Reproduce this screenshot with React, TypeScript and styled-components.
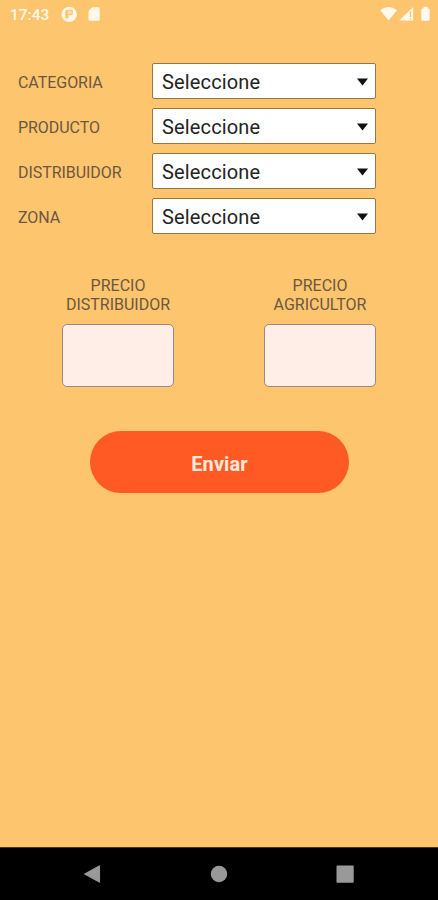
import React from 'react';
import styled, { createGlobalStyle } from 'styled-components';

const GlobalStyle = createGlobalStyle`
  *, *::before, *::after { box-sizing: border-box; }
  body { margin: 0; background: #fdc56d; }
  button, select, input { font-family: inherit; }
`;

const Screen = styled.div`
  display: flex;
  flex-direction: column;
  width: 438px;
  height: 900px;
  overflow: hidden;
  background: #fdc56d;
  font-family: Roboto, 'Liberation Sans', sans-serif;
`;

const StatusBar = styled.header`
  display: flex;
  align-items: center;
  height: 28px;
  padding: 0 7px 0 10px;
  color: #fff8ea;
`;

const Clock = styled.span`
  width: 51px;
  padding-top: 1px;
  font-size: 15.5px;
  font-weight: 500;
  line-height: 28px;
`;

const StatusIcons = styled.div<{ $end?: boolean }>`
  display: flex;
  align-items: center;
  gap: ${({ $end }) => ($end ? '0' : '9px')};
  margin-left: ${({ $end }) => ($end ? 'auto' : '0')};
  svg { display: block; }
`;

const Content = styled.main`
  flex: 1;
  padding-top: 35px;
`;

const Fields = styled.div`
  display: flex;
  flex-direction: column;
  gap: 9px;
  padding-left: 18px;
`;

const Field = styled.div`
  display: grid;
  grid-template-columns: 134px 224px;
  align-items: center;
  height: 36px;
`;

const Label = styled.span`
  padding-top: 2px;
  color: #6d5741;
  font-size: 16px;
  line-height: 19px;
  letter-spacing: -0.05px;
  white-space: nowrap;
`;

const Dropdown = styled.button`
  display: flex;
  align-items: center;
  justify-content: space-between;
  height: 36px;
  padding: 1px 7px 0 9px;
  border: 1px solid #94783f;
  border-radius: 2px;
  background: #fff;
  color: #242424;
  font-size: 20px;
  letter-spacing: 0.15px;
  text-align: left;
  svg { display: block; }
`;

const Prices = styled.div`
  display: flex;
  gap: 90px;
  padding: 42px 0 0 62px;
`;

const Price = styled.label`
  display: flex;
  flex-direction: column;
  align-items: center;
  width: 112px;
`;

const PriceTitle = styled.span`
  color: #6d5741;
  font-size: 16px;
  line-height: 19px;
  text-align: center;
`;

const PriceInput = styled.input`
  width: 112px;
  height: 63px;
  margin-top: 10px;
  border: 1px solid #a08782;
  border-radius: 5px;
  background: #ffeee7;
  outline: none;
`;

const Submit = styled.button`
  display: block;
  width: 259px;
  height: 62px;
  margin: 44px 0 0 90px;
  padding: 3px 0 0;
  border: 0;
  border-radius: 31px;
  background: #ff5a23;
  color: #ffe9df;
  font-size: 20px;
  font-weight: 700;
  letter-spacing: 0.1px;
`;

const NavBar = styled.nav`
  display: flex;
  align-items: center;
  justify-content: space-between;
  height: 53px;
  padding: 0 84px 0 83px;
  border-top: 1px solid #49391f;
  background: #000;
  svg { display: block; }
`;

const fields = ['CATEGORIA', 'PRODUCTO', 'DISTRIBUIDOR', 'ZONA'];

const prices = ['DISTRIBUIDOR', 'AGRICULTOR'];

export default function App() {
  return (
    <>
      <GlobalStyle />
      <Screen>
        <StatusBar>
          <Clock>17:43</Clock>
          <StatusIcons>
            <svg width="17" height="17" viewBox="0 0 17 17">
              <circle cx="8.2" cy="8.4" r="7.7" fill="#fff8ea" />
              <path d="M4.3 4.2h3.2v8.2H4.3z" fill="#fdc56d" />
              <path d="M7.5 4.4h3.6v4H7.5" fill="#fee2b4" stroke="#fdc56d" strokeWidth="1.2" />
            </svg>
            <svg width="14" height="16" viewBox="0 0 14 16">
              <path d="M5.2 1.2h6.2q1.3 0 1.3 1.3v11q0 1.3-1.3 1.3H2.8q-1.3 0-1.3-1.3V5z" fill="#fff8ea" />
              <path d="M5.5 3v2M7.8 3v2M10.1 3v2" stroke="#feebcb" strokeWidth="0.9" />
            </svg>
          </StatusIcons>
          <StatusIcons $end>
            <svg width="19" height="16" viewBox="0 0 19 16">
              <path d="M.2 4.2Q8.6-2 17 4.2L8.6 14.6z" fill="#fffaf0" />
            </svg>
            <svg width="20" height="16" viewBox="0 0 20 16">
              <path d="M14.2 1v13.5H.2z" fill="#fffaf0" />
              <path d="M11.4 5.2v5.8M11.4 12.2v1.3" stroke="#fdc56d" strokeWidth="1.6" />
            </svg>
            <svg width="12" height="16" viewBox="0 0 12 16">
              <path d="M4.5 .8h4v1.6h1q1.2 0 1.2 1.2v10q0 1.2-1.2 1.2h-6q-1.2 0-1.2-1.2v-10q0-1.2 1.2-1.2h1z" fill="#fffaf0" />
            </svg>
          </StatusIcons>
        </StatusBar>
        <Content>
          <Fields>
            {fields.map((name) => (
              <Field key={name}>
                <Label>{name}</Label>
                <Dropdown type="button">
                  Seleccione
                  <svg width="11" height="8" viewBox="0 0 11 8">
                    <path d="M0 .5h11L5.5 7.5z" fill="#111" />
                  </svg>
                </Dropdown>
              </Field>
            ))}
          </Fields>
          <Prices>
            {prices.map((name) => (
              <Price key={name}>
                <PriceTitle>
                  PRECIO
                  <br />
                  {name}
                </PriceTitle>
                <PriceInput />
              </Price>
            ))}
          </Prices>
          <Submit type="button">Enviar</Submit>
        </Content>
        <NavBar>
          <svg width="18" height="20" viewBox="0 0 18 20">
            <path d="M16.6 1.7v16.6L1.5 10z" fill="#999" stroke="#999" strokeWidth="1" strokeLinejoin="round" />
          </svg>
          <svg width="18" height="18" viewBox="0 0 18 18">
            <circle cx="9" cy="9" r="8.2" fill="#999" />
          </svg>
          <svg width="18" height="18" viewBox="0 0 18 18">
            <rect x=".5" y=".5" width="17.2" height="17.2" rx="1" fill="#999" />
          </svg>
        </NavBar>
      </Screen>
    </>
  );
}
